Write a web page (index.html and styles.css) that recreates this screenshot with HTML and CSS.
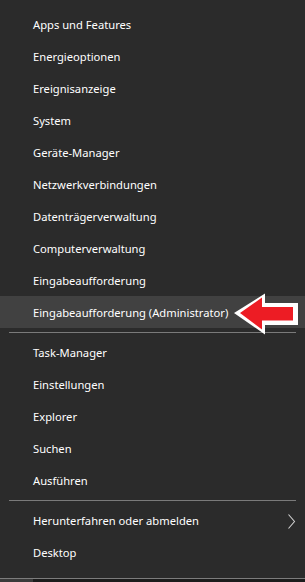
FILE: index.html
```html
<!DOCTYPE html>
<html lang="de">
<head>
<meta charset="utf-8">
<link rel="stylesheet" href="styles.css">
</head>
<body>
<div class="menu">
  <div class="group">
    <div class="item">Apps und Features</div>
    <div class="item">Energieoptionen</div>
    <div class="item">Ereignisanzeige</div>
    <div class="item">System</div>
    <div class="item">Geräte-Manager</div>
    <div class="item">Netzwerkverbindungen</div>
    <div class="item">Datenträgerverwaltung</div>
    <div class="item">Computerverwaltung</div>
    <div class="item">Eingabeaufforderung</div>
    <div class="item active">Eingabeaufforderung (Administrator)
      <svg class="arrow" width="72" height="44" viewBox="0 0 72 44">
        <polygon points="2,20 33,0.5 33,10 66,10 66,32 33,32 33,41.5" fill="#ffffff"/>
        <polygon points="8,20 30,4.5 30,14 61,14 61,27.5 30,27.5 30,36.5" fill="#ed1c24"/>
      </svg>
    </div>
  </div>
  <div class="sep"></div>
  <div class="group">
    <div class="item">Task-Manager</div>
    <div class="item">Einstellungen</div>
    <div class="item">Explorer</div>
    <div class="item">Suchen</div>
    <div class="item">Ausführen</div>
  </div>
  <div class="sep"></div>
  <div class="group">
    <div class="item submenu">Herunterfahren oder abmelden
      <svg class="chev" width="8" height="16" viewBox="0 0 8 16"><polyline points="0.5,0.5 6.5,7.5 0.5,14.5" fill="none" stroke="#d0d0d0" stroke-width="1.1"/></svg>
    </div>
    <div class="item">Desktop</div>
  </div>
</div>
<div class="taskbar"><div class="tb-start"></div></div>
</body>
</html>
```

FILE: styles.css
```css
html, body {
  margin: 0;
  padding: 0;
  background: #2b2b2b;
  width: 305px;
  height: 582px;
  overflow: hidden;
}
body {
  font-family: "Segoe UI", "Noto Sans", sans-serif;
  font-size: 11.2px;
  color: #ffffff;
}
.menu {
  padding-top: 8px;
  height: 579px;
  box-sizing: border-box;
  border-bottom: 1px solid #7c7c7c;
}
.item {
  position: relative;
  height: 32px;
  box-sizing: border-box;
  padding-top: 1px;
  line-height: 31px;
  padding-left: 33px;
  white-space: nowrap;
}
.item.active {
  background: #414141;
}
.sep {
  height: 1px;
  background: #7a7a7a;
  margin: 4px 9px 3px 9px;
}
.arrow {
  position: absolute;
  left: 232px;
  top: -3px;
}
.chev {
  position: absolute;
  left: 288px;
  top: 10px;
}
.taskbar {
  height: 3px;
  background: #1c1c1c;
}
.tb-start {
  width: 33px;
  height: 100%;
  background: #3a3a3a;
}
```
